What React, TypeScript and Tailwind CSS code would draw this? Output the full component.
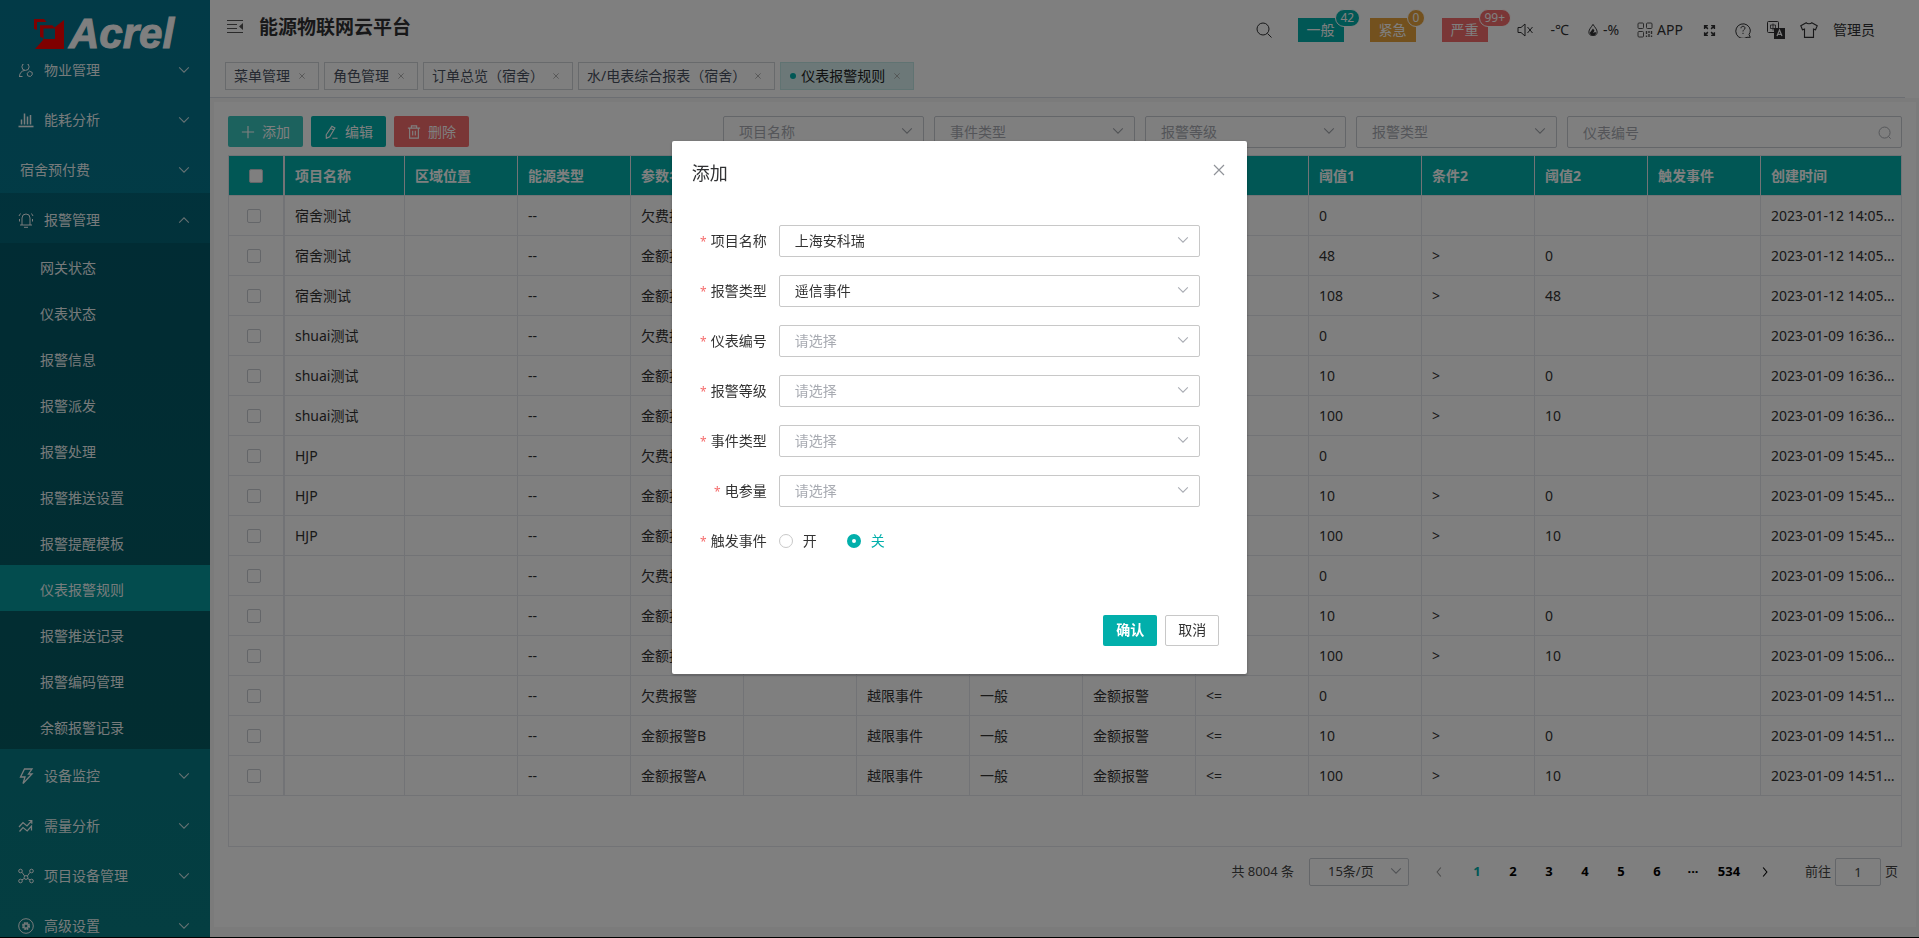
import { useState } from "react";
import type { ReactNode } from "react";

interface IconProps {
    size?: number;
    width?: number;
    className?: string;
    children: ReactNode;
}

function Icon({ size = 16, width = 1, className = "", children }: IconProps) {
    return (
        <svg
            width={size}
            height={size}
            viewBox="0 0 16 16"
            fill="none"
            stroke="currentColor"
            strokeWidth={width}
            className={`shrink-0 ${className}`}
            aria-hidden="true"
        >
            {children}
        </svg>
    );
}

const icons = {
    user: (
        <>
            <circle cx="7.5" cy="4.8" r="3.6" />
            <path d="M1.5 14.5c0-3.4 2.2-5.8 5.3-6.1M1 14.5h3.5M11.500 9.200l2.700 1.200v2.400l-1.900 1.700-2.500-.6-.7-2.500z" />
        </>
    ),
    bars: (
        <>
            <path d="M.5 14.5h15" strokeWidth="1.6" />
            <path d="M3.5 12.500V7.500M6.500 12.500V1.500M9.500 12.500V4.500M12.500 12.500V3" strokeWidth="1.500" />
        </>
    ),
    bell: (
        <path d="M4 13V6a4 4 0 0 1 8 0v7M2 13h12M6 15.300h4M2.500 1.500 1 4M13.500 1.500 15 4M1.500 7v2.500M14.500 7v2.500" />
    ),
    bolt: <path d="M6.500 1h7.500L10.500 6H14L5 15.500l2-6.500H2.500z" strokeWidth="1.300" />,
    trend: (
        <path
            d="m1 9 4-4.500 4 3.500 4.500-5M10.500 2.500h3.300v3.300M1.500 13.500 5 9.500l4.200 3.500L13.500 8v4.500"
            strokeWidth="1.200"
        />
    ),
    nodes: (
        <>
            <circle cx="2.500" cy="3" r="1.800" />
            <circle cx="13.500" cy="3" r="1.800" />
            <circle cx="2.500" cy="13" r="1.800" />
            <circle cx="13.500" cy="13" r="1.800" />
            <circle cx="8" cy="9.500" r="1.900" />
            <path d="M4 4.300 6.600 8M12 4.300 9.400 8M4 11.800l2.300-1.300M12 11.800l-2.300-1.300" />
        </>
    ),
    gear: (
        <>
            <circle cx="8" cy="8" r="7.300" />
            <circle cx="8" cy="8" r="3" strokeWidth="2" strokeDasharray="1.700 .650" />
            <circle cx="8" cy="8" r="2" />
        </>
    ),
};

const menuTop: { label: string; icon?: ReactNode }[] = [
    { label: "物业管理", icon: icons.user },
    { label: "能耗分析", icon: icons.bars },
    { label: "宿舍预付费" },
];

const alarmMenu = [
    "网关状态",
    "仪表状态",
    "报警信息",
    "报警派发",
    "报警处理",
    "报警推送设置",
    "报警提醒模板",
    "仪表报警规则",
    "报警推送记录",
    "报警编码管理",
    "余额报警记录",
];

const menuBottom = [
    { label: "设备监控", icon: icons.bolt },
    { label: "需量分析", icon: icons.trend },
    { label: "项目设备管理", icon: icons.nodes },
    { label: "高级设置", icon: icons.gear },
];

const tabs = ["菜单管理", "角色管理", "订单总览（宿舍）", "水/电表综合报表（宿舍）", "仪表报警规则"];

const columns = [
    "项目名称",
    "区域位置",
    "能源类型",
    "参数名称",
    "仪表编号",
    "报警类型",
    "报警等级",
    "事件类型",
    "条件1",
    "阈值1",
    "条件2",
    "阈值2",
    "触发事件",
    "创建时间",
];

// project, created time and the upper limits of each group of three rules
const groups = [
    { project: "宿舍测试", time: "2023-01-12 14:05:21", low: "48", high: "108" },
    { project: "shuai测试", time: "2023-01-09 16:36:40", low: "10", high: "100" },
    { project: "HJP", time: "2023-01-09 15:45:12", low: "10", high: "100" },
    { project: "", time: "2023-01-09 15:06:33", low: "10", high: "100" },
    { project: "", time: "2023-01-09 14:51:08", low: "10", high: "100" },
];

const rows = groups.flatMap((g) => {
    const build = (name: string, v1: string, cond2: string, v2: string) => [
        g.project, "", "--", name, "", "越限事件", "一般", "金额报警", "<=", v1, cond2, v2, "", g.time,
    ];
    return [
        build("欠费报警", "0", "", ""),
        build("金额报警B", g.low, ">", "0"),
        build("金额报警A", g.high, ">", g.low),
    ];
});

const filters = ["项目名称", "事件类型", "报警等级", "报警类型"];

const formFields = [
    { id: "project", label: "项目名称", value: "上海安科瑞" },
    { id: "alarmType", label: "报警类型", value: "遥信事件" },
    { id: "meter", label: "仪表编号", value: "" },
    { id: "level", label: "报警等级", value: "" },
    { id: "eventType", label: "事件类型", value: "" },
    { id: "param", label: "电参量", value: "" },
];

function Chevron({ up = false, className = "" }: { up?: boolean; className?: string }) {
    return (
        <Icon size={14} className={className}>
            <path d={up ? "m2.500 11 5.500-5.500 5.500 5.500" : "m2.500 5 5.500 5.500L13.500 5"} strokeWidth="1.200" />
        </Icon>
    );
}

function Logo() {
    return (
        <div className="flex h-16 shrink-0 items-center gap-[5px] pt-1 pl-[34px]">
            <svg width="30" height="30" viewBox="0 0 30 30" aria-hidden="true">
                <path
                    d="M0 0h10l2.500 3H3v8L0 9.700zM6 6.300h12.300l2.200 2.300L30 1v29H1l8-9v-2l-3-1.300zm3.500 3.200v10.500H21V9.500z"
                    fill="#ff0000"
                    fillRule="evenodd"
                />
            </svg>
            <span className="font-['Liberation_Sans',sans-serif] text-[42px] leading-[56px] font-bold text-white italic [-webkit-text-stroke:1px_white]">
                Acrel
            </span>
        </div>
    );
}

function MenuItem({ label, icon, open = false }: { label: string; icon?: ReactNode; open?: boolean }) {
    return (
        <button
            className={`flex h-[50px] w-full items-center pt-1 pr-[19px] text-left text-sm text-white/95 ${
                icon ? "pl-[18px]" : "pl-5"
            } ${open ? "bg-black/15" : ""}`}
        >
            {icon && <Icon className="mr-2.5">{icon}</Icon>}
            <span className="flex-1">{label}</span>
            <Chevron up={open} className="text-white/80" />
        </button>
    );
}

function Sidebar() {
    return (
        <aside className="flex w-[210px] shrink-0 flex-col bg-linear-to-b from-[#04748e] to-[#087c82]">
            <Logo />
            <nav className="min-h-0 flex-1 overflow-hidden">
                {/* list is scrolled down a little under the logo */}
                <div className="-mt-[21px]">
                    {menuTop.map((item) => (
                        <MenuItem key={item.label} {...item} />
                    ))}
                    <MenuItem label="报警管理" icon={icons.bell} open />
                    <ul className="bg-black/25">
                        {alarmMenu.map((label) => (
                            <li key={label}>
                                <a
                                    href="#"
                                    className={`flex h-[46px] items-center pt-1 pl-10 text-sm text-white/95 ${
                                        label === "仪表报警规则" ? "bg-[#06989c]" : ""
                                    }`}
                                >
                                    {label}
                                </a>
                            </li>
                        ))}
                    </ul>
                    {menuBottom.map((item) => (
                        <MenuItem key={item.label} {...item} />
                    ))}
                </div>
            </nav>
        </aside>
    );
}

function AlarmTag({ label, count, color }: { label: string; count: string; color: string }) {
    return (
        <button className={`relative h-6 w-[46px] text-sm text-white ${color}`}>
            {label}
            <span
                className={`absolute -top-[9px] left-[37px] flex h-[18px] items-center rounded-full border border-white px-[5px] text-xs ${color}`}
            >
                {count}
            </span>
        </button>
    );
}

function Header() {
    return (
        <header className="bg-white">
            <div className="flex h-[62px] justify-between pr-11 pl-[17px]">
                <div className="flex h-[54px] items-center gap-4">
                    <button aria-label="收起菜单" className="text-[#555]">
                        <Icon>
                            <path d="M0 1.500h16M0 5.500h10M0 9.500h10M0 13.500h16" strokeWidth="1.200" />
                            <path d="m16 4v7l-4-3.500z" fill="currentColor" stroke="none" />
                        </Icon>
                    </button>
                    <h1 className="text-[19px] font-bold text-[#303133]">能源物联网云平台</h1>
                </div>
                <div className="flex h-[60px] items-center text-sm text-[#303133]">
                    <div className="mr-[29px] flex items-center gap-[26px]">
                        <button aria-label="搜索">
                            <Icon>
                                <circle cx="7" cy="7" r="6" />
                                <path d="m11.500 11.500 4 4" />
                            </Icon>
                        </button>
                        <AlarmTag label="一般" count="42" color="bg-[#02afab]" />
                        <AlarmTag label="紧急" count="0" color="bg-[#e6a23c]" />
                        <AlarmTag label="严重" count="99+" color="bg-[#f56c6c]" />
                    </div>
                    <div className="mr-4 flex items-center gap-[18px]">
                        <button aria-label="静音">
                            <Icon>
                                <path d="M1 5.500h3l4-3.500v12l-4-3.500H1zM10.500 5l5 6M15.500 5l-5 6" />
                            </Icon>
                        </button>
                        <span>-℃</span>
                        <span className="flex items-center gap-1">
                            <Icon size={12}>
                                <path d="M8 .5C6 4 2.500 7 2.500 10.500a5.500 5 0 0 0 11 0C13.500 7 10 4 8 .5z" strokeWidth="1.300" />
                                <path d="M3.500 12 8 6l2 3-2 3 3-1.500 1.500 1.500-2 2.500h-5z" fill="currentColor" stroke="none" />
                            </Icon>
                            -%
                        </span>
                        <span className="flex items-center gap-1">
                            <Icon className="text-[#555]">
                                <rect x="1" y="1" width="5.500" height="5.500" rx="1" />
                                <rect x="9.500" y="1" width="5.500" height="5.500" rx="1" />
                                <rect x="1" y="9.500" width="5.500" height="5.500" rx="1" />
                                <path d="M9.500 9v3M12 9v2M14.500 9v3M9.500 13.500V15M12 12v3M14.500 13.500V15" strokeWidth="1.400" />
                            </Icon>
                            APP
                        </span>
                        <button aria-label="全屏" className="flex w-4 justify-center">
                            <Icon size={13}>
                                <path
                                    d="M2 6V2h4M2.500 2.500 6 6M14 6V2h-4M13.500 2.500 10 6M2 10v4h4M2.500 13.500 6 10M14 10v4h-4M13.500 13.500 10 10"
                                    strokeWidth="1.800"
                                />
                            </Icon>
                        </button>
                        <button aria-label="帮助">
                            <Icon>
                                <path d="M15.300 15.300h-3.300A7.300 7.300 0 1 1 15.300 8a7 7 0 0 1-1.300 4.500z" />
                                <path d="M6 6.300C6 5 6.800 4.300 8 4.300s2 .7 2 1.800C10 7.500 8 7.600 8 9.500M8 10.800V12" />
                            </Icon>
                        </button>
                    </div>
                    <div className="flex items-center gap-[15px]">
                        <button aria-label="语言">
                            <svg width="18" height="18" viewBox="0 0 18 18" fill="none" aria-hidden="true">
                                <rect x=".5" y=".5" width="11" height="11" rx="1" stroke="currentColor" />
                                <path d="M3.500 4h5v3.500h-5zM6 2.500v7" stroke="currentColor" strokeWidth=".8" />
                                <rect x="7" y="7" width="11" height="11" fill="currentColor" />
                                <path d="m10 15 2.500-6 2.500 6M11 13.300h3" stroke="#fff" strokeWidth="1.200" />
                            </svg>
                        </button>
                        <button aria-label="主题">
                            <Icon size={18}>
                                <path d="M5.500 1.500c.8 1.300 4.200 1.300 5 0l4.800 2.700-1.500 3.600-1.800-.6v7.300H4V7.200l-1.800.6L.7 4.200z" />
                            </Icon>
                        </button>
                        <a href="#">管理员</a>
                    </div>
                </div>
            </div>
            <div className="mr-3.5 flex gap-[5px] border-b border-[#d8dce5] pb-[7px] pl-[15px]">
                {tabs.map((tab, i) => {
                    const active = i === tabs.length - 1;
                    return (
                        <div
                            key={tab}
                            className={`flex h-7 items-center gap-1 border px-2 text-sm ${
                                active
                                    ? "border-[#c0e6e4] bg-[#d9f1f0] text-[#222]"
                                    : "border-[#d0d4d8] bg-white text-[#495060]"
                            }`}
                        >
                            {active && <span className="size-2 scale-75 rounded-full bg-[#02afab]" />}
                            <a href="#">{tab}</a>
                            <button
                                aria-label={`关闭${tab}`}
                                className="flex size-4 items-center justify-center text-[#999]"
                            >
                                <Icon size={6}>
                                    <path d="m1 1 14 14M15 1 1 15" strokeWidth="2" />
                                </Icon>
                            </button>
                        </div>
                    );
                })}
            </div>
        </header>
    );
}

function Toolbar() {
    const button = "flex h-[31px] w-[75px] items-center justify-center gap-[7px] rounded-xs text-sm text-white";
    return (
        <div className="mb-[7px] flex h-8 items-start justify-between">
            <div className="flex gap-2">
                <button className={`${button} bg-[#38c4bc]`}>
                    <Icon size={14}>
                        <path d="M8 1v14M1 8h14" strokeWidth="1.300" />
                    </Icon>
                    添加
                </button>
                <button className={`${button} bg-[#02afab]`}>
                    <Icon size={14}>
                        <path d="m9 1.500 3.500 2-6 10-3.800 1.700-.2-4zM7.500 3.800l3.500 2M9.500 15.200h6" strokeWidth="1.300" />
                    </Icon>
                    编辑
                </button>
                <button className={`${button} bg-[#f56c6c]`}>
                    <Icon size={14}>
                        <path d="M1 3.500h14M5 3.500V1h6v2.500M3 3.500V15h10V3.500M6.500 6.500v5.500M9.500 6.500v5.500" strokeWidth="1.300" />
                    </Icon>
                    删除
                </button>
            </div>
            <div className="flex gap-2.5">
                {filters.map((label) => (
                    <div key={label} className="relative">
                        <select
                            aria-label={label}
                            className="h-8 w-[201px] appearance-none rounded-xs border border-[#c8ccd2] bg-white pl-[15px] text-sm text-[#a8abb2]"
                        >
                            <option>{label}</option>
                        </select>
                        <Chevron className="pointer-events-none absolute top-2 right-2.5 text-[#a0a4aa]" />
                    </div>
                ))}
                <div className="relative">
                    <input
                        aria-label="仪表编号"
                        placeholder="仪表编号"
                        className="h-8 w-[335px] rounded-xs border border-[#c8ccd2] bg-white px-[15px] text-sm placeholder:text-[#a8abb2]"
                    />
                    <Icon size={14} className="absolute top-2.5 right-2.5 text-[#a0a4aa]">
                        <circle cx="7.500" cy="7.500" r="6.300" />
                        <path d="m12 12 2.500 2.500" />
                    </Icon>
                </div>
            </div>
        </div>
    );
}

function RuleTable() {
    const box = "block size-3.5 appearance-none rounded-xs border border-[#c8ccd2] bg-white";
    return (
        <div className="flex-1 border border-[#e4e7ed]">
            <table className="w-full table-fixed border-separate border-spacing-0 text-sm text-[#333]">
                <colgroup>
                    <col className="w-[56px]" />
                    {columns.map((name, i) => (
                        <col key={name} className={i === 0 ? "w-[120px]" : i === 13 ? "" : "w-[113px]"} />
                    ))}
                </colgroup>
                <thead>
                    <tr className="h-10 bg-[#02afab] text-left text-white">
                        <th className="border-r-2 border-b border-[#e4e7ed] pl-5">
                            <input type="checkbox" aria-label="全选" className={box} />
                        </th>
                        {columns.map((name) => (
                            <th
                                key={name}
                                className="border-r border-b border-[#e4e7ed] pl-2.5 font-bold last:border-r-0"
                            >
                                {name}
                            </th>
                        ))}
                    </tr>
                </thead>
                <tbody>
                    {rows.map((row, r) => (
                        <tr key={r} className="h-10">
                            <td className="border-r-2 border-b border-[#e4e7ed] pl-[18px]">
                                <input type="checkbox" aria-label={`选择第${r + 1}行`} className={box} />
                            </td>
                            {row.map((cell, c) => (
                                <td
                                    key={c}
                                    className="truncate border-r border-b border-[#e4e7ed] pr-1 pl-2.5 last:border-r-0"
                                >
                                    {cell}
                                </td>
                            ))}
                        </tr>
                    ))}
                </tbody>
            </table>
        </div>
    );
}

function Pagination() {
    return (
        <div className="mt-[11px] mb-[27px] flex h-7 items-center justify-end pr-1 text-[13px] text-[#444]">
            <span className="mr-[15px]">共 8004 条</span>
            <div className="relative mr-6">
                <select
                    aria-label="每页条数"
                    className="h-7 w-[100px] appearance-none rounded-xs border border-[#c8ccd2] bg-white pl-[18px] text-[13px]"
                >
                    <option>15条/页</option>
                </select>
                <Chevron className="pointer-events-none absolute top-1.5 right-1.5 text-[#a0a4aa]" />
            </div>
            <button aria-label="上一页" className="w-[26px] text-[#999]">
                <Icon size={12}>
                    <path d="m10.500 2-5 6 5 6" strokeWidth="1.500" />
                </Icon>
            </button>
            <div className="mr-[22px] grid w-[324px] grid-cols-9 text-center font-bold text-black">
                {["1", "2", "3", "4", "5", "6", "···", "534"].map((page) => (
                    <button key={page} className={page === "1" ? "text-[#02afab]" : ""}>
                        {page}
                    </button>
                ))}
                <button aria-label="下一页" className="flex items-center justify-center">
                    <Icon size={12}>
                        <path d="m5.500 2 5 6-5 6" strokeWidth="1.500" />
                    </Icon>
                </button>
            </div>
            <label htmlFor="jump">前往</label>
            <input
                id="jump"
                defaultValue="1"
                className="mx-1 h-7 w-[46px] rounded-xs border border-[#c8ccd2] text-center"
            />
            <span>页</span>
        </div>
    );
}

function AddDialog() {
    const [trigger, setTrigger] = useState("关");

    return (
        <div className="fixed inset-0 flex items-start justify-center bg-black/50 pt-[15vh]">
            <div
                role="dialog"
                aria-label="添加"
                className="w-[30%] rounded-xs bg-white px-5 pt-5 pb-7 shadow-[0_1px_3px_rgba(0,0,0,0.3)]"
            >
                <div className="flex items-start justify-between">
                    <h2 className="text-lg leading-6 text-[#303133]">添加</h2>
                    <button aria-label="关闭" className="flex h-[18px] items-center text-[#909399]">
                        <Icon>
                            <path d="m3 3 10 10M13 3 3 13" strokeWidth="1.200" />
                        </Icon>
                    </button>
                </div>
                <form className="mt-10 flex flex-col gap-[18px] pr-[27px] text-sm text-[#333]">
                    {formFields.map((field) => (
                        <div key={field.id} className="flex h-8 items-center">
                            <label htmlFor={field.id} className="w-[87px] pr-3 text-right">
                                <span className="mr-1 text-xs text-[#f56c6c]">*</span>
                                {field.label}
                            </label>
                            <div className="relative flex-1">
                                <select
                                    id={field.id}
                                    className={`block h-8 w-full appearance-none rounded-xs border border-[#c8c8c8] bg-white pl-[15px] ${
                                        field.value ? "" : "text-[#a8abb2]"
                                    }`}
                                >
                                    <option>{field.value || "请选择"}</option>
                                </select>
                                <Chevron className="pointer-events-none absolute top-2 right-2.5 text-[#a8abb2]" />
                            </div>
                        </div>
                    ))}
                    <div role="radiogroup" aria-labelledby="trigger-label" className="flex h-8 items-center">
                        <span id="trigger-label" className="w-[87px] pr-3 text-right">
                            <span className="mr-1 text-xs text-[#f56c6c]">*</span>
                            触发事件
                        </span>
                        {["开", "关"].map((option) => (
                            <label
                                key={option}
                                className={`mr-[30px] flex items-center gap-2.5 ${
                                    trigger === option ? "text-[#02afab]" : ""
                                }`}
                            >
                                <input
                                    type="radio"
                                    name="trigger"
                                    checked={trigger === option}
                                    onChange={() => setTrigger(option)}
                                    className="size-3.5 appearance-none rounded-full border border-[#c8c8c8] bg-white checked:border-5 checked:border-[#02afab]"
                                />
                                {option}
                            </label>
                        ))}
                    </div>
                </form>
                <div className="mt-[58px] flex justify-end gap-2 pr-2 text-sm">
                    <button className="h-[31px] w-[54px] rounded-xs bg-[#02afab] font-bold text-white">确认</button>
                    <button className="h-[31px] w-[54px] rounded-xs border border-[#c8c8c8] text-[#333]">取消</button>
                </div>
            </div>
        </div>
    );
}

export default function App() {
    return (
        <div className="flex h-screen border-b border-black bg-[#f6f6f6] font-['Noto_Sans','Noto_Sans_CJK_SC',sans-serif]">
            <Sidebar />
            <div className="flex min-w-0 flex-1 flex-col">
                <Header />
                <main className="flex min-h-0 flex-1 flex-col pt-1 pr-[3px] pb-2.5 pl-1">
                    <section className="flex flex-1 flex-col bg-white p-3.5">
                        <Toolbar />
                        <RuleTable />
                        <Pagination />
                    </section>
                </main>
            </div>
            <AddDialog />
        </div>
    );
}
